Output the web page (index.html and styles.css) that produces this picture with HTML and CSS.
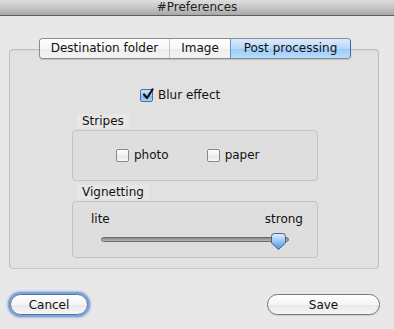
FILE: index.html
```html
<!DOCTYPE html>
<html>
<head>
<meta charset="utf-8">
<link rel="stylesheet" href="styles.css">
</head>
<body>
<div class="window">
  <div class="titlebar">#Preferences</div>
  <div class="tabview">
    <div class="tabs">
      <div class="tab t1">Destination folder</div>
      <div class="tab t2">Image</div>
      <div class="tab t3 selected">Post processing</div>
    </div>
    <div class="panel">
      <label class="check blur">
        <span class="box checked">
          <svg width="13" height="13" viewBox="0 0 13 13"><path d="M3 6.5 L6 10 L11.5 1.5" fill="none" stroke="#111" stroke-width="2.2" stroke-linecap="round" stroke-linejoin="round"/></svg>
        </span>
        <span>Blur effect</span>
      </label>
      <div class="group">
        <div class="group-label">Stripes</div>
        <div class="group-box stripes">
          <label class="check photo"><span class="box"></span><span>photo</span></label>
          <label class="check paper"><span class="box"></span><span>paper</span></label>
        </div>
      </div>
      <div class="group vig">
        <div class="group-label">Vignetting</div>
        <div class="group-box vignet">
          <div class="slider-labels"><span>lite</span><span>strong</span></div>
          <div class="slider">
            <div class="track"></div>
            <svg class="knob" width="18" height="18" viewBox="0 0 18 18">
              <defs>
                <linearGradient id="kg" x1="0" y1="0" x2="0" y2="1">
                  <stop offset="0" stop-color="#e4f0fc"/>
                  <stop offset="0.45" stop-color="#9cc8f4"/>
                  <stop offset="1" stop-color="#4f90e0"/>
                </linearGradient>
              </defs>
              <path d="M1.5 3.5 Q1.5 0.5 4.5 0.5 H12.5 Q15.5 0.5 15.5 3.5 V10 L8.5 16.5 L1.5 10 Z" fill="url(#kg)" stroke="#3d5e92" stroke-width="1"/>
            </svg>
          </div>
        </div>
      </div>
    </div>
  </div>
  <div class="buttons">
    <button class="btn focus">Cancel</button>
    <button class="btn save">Save</button>
  </div>
</div>
</body>
</html>
```

FILE: styles.css
```css
html, body {
  margin: 0;
  padding: 0;
}
body {
  background: #e8e8e8;
  font-family: "DejaVu Sans", "Liberation Sans", sans-serif;
  font-size: 12px;
  color: #111;
}
.window {
  width: 394px;
  height: 329px;
  display: flex;
  flex-direction: column;
}
.titlebar {
  height: 15px;
  line-height: 14px;
  border-bottom: 1px solid #5e5e5e;
  background: linear-gradient(#dedede, #c6c6c6 50%, #a8a8a8);
  text-align: center;
  font-size: 12px;
  color: #222;
}
.tabview {
  margin: 22px 0 0 9px;
  width: 370px;
}
.tabs {
  position: relative;
  z-index: 1;
  margin-left: 30px;
  width: 310px;
  height: 19px;
  display: flex;
  border: 1px solid #8c8c8c;
  border-right-color: #3e64a8;
  border-radius: 4px;
  overflow: hidden;
  box-shadow: 0 1px 1px rgba(0,0,0,0.15);
}
.tab {
  height: 19px;
  line-height: 19px;
  text-align: center;
  background: linear-gradient(#ffffff, #f7f7f7 50%, #ececec 51%, #f4f4f4);
  box-sizing: border-box;
}
.t1 { width: 129px; }
.t2 { width: 61px; border-left: 1px solid #c4c4c4; }
.t3 { width: 120px; }
.tab.selected {
  background: linear-gradient(#d9ebfd, #b7d8fa 50%, #9ccaf7 51%, #b6dcfb);
  border-left: 1px solid #6a8fc9;
}
.panel {
  margin-top: -10px;
  border: 1px solid #bcbcbc;
  border-bottom-color: #c6c6c6;
  border-radius: 4px;
  background: #e1e1e1;
  box-shadow: inset 0 1px 1px rgba(0,0,0,0.04);
  padding: 38px 0 0 0;
  height: 180px;
}
.check {
  display: flex;
  align-items: center;
  height: 14px;
}
.box {
  width: 11px;
  height: 11px;
  border: 1px solid #8a8a8a;
  border-radius: 2px;
  background: linear-gradient(#ffffff, #f1f1f1 50%, #e6e6e6 51%, #f8f8f8);
  margin-right: 5px;
  position: relative;
  flex: none;
}
.box.checked {
  border-color: #4a6da6;
  background: linear-gradient(#cfe4fb, #9cc7f3 50%, #7cb2ee 51%, #a9d2f8);
}
.box.checked svg {
  position: absolute;
  left: 0;
  top: -2px;
}
.blur {
  margin-left: 130px;
}
.group {
  margin-top: 12px;
}
.group.vig {
  margin-top: 4px;
}
.group-label {
  margin-left: 67px;
  display: inline-block;
  padding: 0 5px;
  height: 14px;
  line-height: 14px;
  background: #e7e7e7;
}
.group-box {
  margin: 2px 0 0 62px;
  width: 244px;
  border: 1px solid #c3c3c3;
  border-radius: 4px;
  background: #dedede;
}
.stripes {
  height: 49px;
  display: flex;
  align-items: flex-start;
}
.stripes .check {
  margin-top: 17px;
}
.photo { margin-left: 43px; }
.paper { margin-left: 38px; }
.vignet {
  height: 55px;
}
.slider-labels {
  display: flex;
  justify-content: space-between;
  padding: 10px 14px 0 18px;
  height: 14px;
  line-height: 14px;
}
.slider {
  position: relative;
  height: 20px;
  margin-top: 2px;
}
.track {
  position: absolute;
  left: 28px;
  width: 186px;
  top: 9px;
  height: 3px;
  border: 1px solid #6c6c6c;
  border-radius: 3px;
  background: linear-gradient(#8a8a8a, #b8b8b8);
}
.knob {
  position: absolute;
  left: 197px;
  top: 5px;
}
.buttons {
  display: flex;
  justify-content: space-between;
  padding: 0 14px 0 10px;
  margin-top: 25px;
}
.btn {
  font-family: "DejaVu Sans", "Liberation Sans", sans-serif;
  font-size: 12px;
  color: #111;
  height: 21px;
  padding: 0;
  border: 1px solid #777;
  border-radius: 11px;
  background: linear-gradient(#ffffff, #f5f5f5 50%, #e8e8e8 51%, #f6f6f6);
  box-shadow: 0 1px 1px rgba(0,0,0,0.12);
}
.btn.focus {
  width: 78px;
  border-color: #58709a;
  box-shadow: 0 0 0 2px #7aa3dc, 0 0 2px 3px rgba(90,140,210,0.45);
}
.btn.save {
  width: 113px;
}
```
